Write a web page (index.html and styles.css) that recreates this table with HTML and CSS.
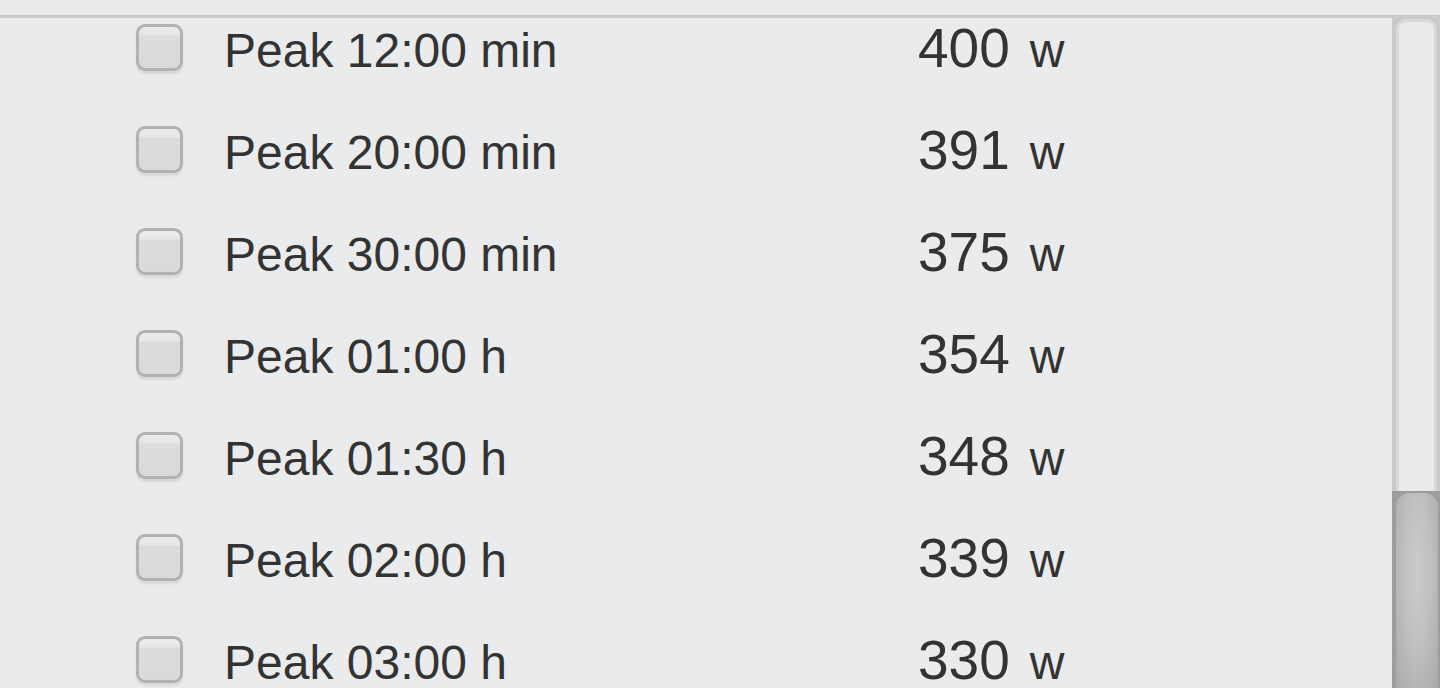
FILE: index.html
```html
<!DOCTYPE html>
<html lang="en">
<head>
  <meta charset="UTF-8">
  <meta name="viewport" content="width=device-width, initial-scale=1">
  <title>Peak power</title>
  <link rel="stylesheet" href="styles.css">
</head>
<body>

<div class="header"></div>

<div class="main">
  <div class="list">
    <div class="list-inner">
      <div class="row">
        <div class="check"></div>
        <div class="text"><span class="label">Peak 12:00 min</span><span class="value"><span class="num">400</span> <span class="unit">w</span></span></div>
      </div>
      <div class="row">
        <div class="check"></div>
        <div class="text"><span class="label">Peak 20:00 min</span><span class="value"><span class="num">391</span> <span class="unit">w</span></span></div>
      </div>
      <div class="row">
        <div class="check"></div>
        <div class="text"><span class="label">Peak 30:00 min</span><span class="value"><span class="num">375</span> <span class="unit">w</span></span></div>
      </div>
      <div class="row">
        <div class="check"></div>
        <div class="text"><span class="label">Peak 01:00 h</span><span class="value"><span class="num">354</span> <span class="unit">w</span></span></div>
      </div>
      <div class="row">
        <div class="check"></div>
        <div class="text"><span class="label">Peak 01:30 h</span><span class="value"><span class="num">348</span> <span class="unit">w</span></span></div>
      </div>
      <div class="row">
        <div class="check"></div>
        <div class="text"><span class="label">Peak 02:00 h</span><span class="value"><span class="num">339</span> <span class="unit">w</span></span></div>
      </div>
      <div class="row">
        <div class="check"></div>
        <div class="text"><span class="label">Peak 03:00 h</span><span class="value"><span class="num">330</span> <span class="unit">w</span></span></div>
      </div>
    </div>
  </div>

  <div class="scrollbar">
    <div class="track"><div class="track-inner"></div></div>
    <div class="thumb"><div class="thumb-inner"></div></div>
  </div>
</div>

</body>
</html>
```

FILE: styles.css
```css
* {
  box-sizing: border-box;
  margin: 0;
  padding: 0;
}

body {
  font-family: 'Liberation Sans', Arial, sans-serif;
  background-color: #eaebed;
  color: #333;
  height: 100vh;
  overflow: hidden;
}

.header {
  height: 18px;
  border-bottom: 3px solid #cbcbcb;
  background-color: #ebebed;
}

.main {
  display: flex;
  height: calc(100vh - 18px);
}

.list {
  flex: 1;
  overflow: hidden;
}

/* scrolled a little past the first row */
.list-inner {
  margin-top: -21px;
}

.row {
  display: flex;
  align-items: center;
  height: 102px;
  padding-left: 136px;
}

.check {
  width: 47px;
  height: 47px;
  flex-shrink: 0;
  margin-top: -1px;
  border: 3px solid #b2b2b2;
  border-radius: 9px;
  background: linear-gradient(to bottom, #ececec 0, #e6e6e6 8px, #dcdcdc 9px, #dadada 100%);
  box-shadow: 0 3px 2px rgba(0, 0, 0, 0.08);
}

.text {
  display: flex;
  align-items: baseline;
  margin-left: 41px;
  padding-top: 2px;
  line-height: 50px;
}

.label {
  width: 694px;
  font-size: 48px;
}

.value {
  display: flex;
  align-items: baseline;
  gap: 20px;
}

.num {
  font-size: 55px;
}

.unit {
  font-size: 48px;
}

.scrollbar {
  width: 48px;
  display: flex;
  flex-direction: column;
}

.track {
  height: 473px;
  flex-shrink: 0;
  background-color: #cacaca;
  padding: 1px 3px 0 4px;
}

.track-inner {
  height: 100%;
  border: 3px solid #d8d8d8;
  border-bottom: none;
  border-radius: 10px 10px 0 0;
  background-color: #ebebed;
}

.thumb {
  flex: 1;
  background-color: #9d9d9d;
  padding: 2px 2px 0 4px;
}

.thumb-inner {
  height: 100%;
  border-radius: 14px 14px 0 0;
  background: radial-gradient(ellipse at 50% 40%, #cbcbcb 0, #c0c0c0 45%, #a9a9a9 100%);
}
```
